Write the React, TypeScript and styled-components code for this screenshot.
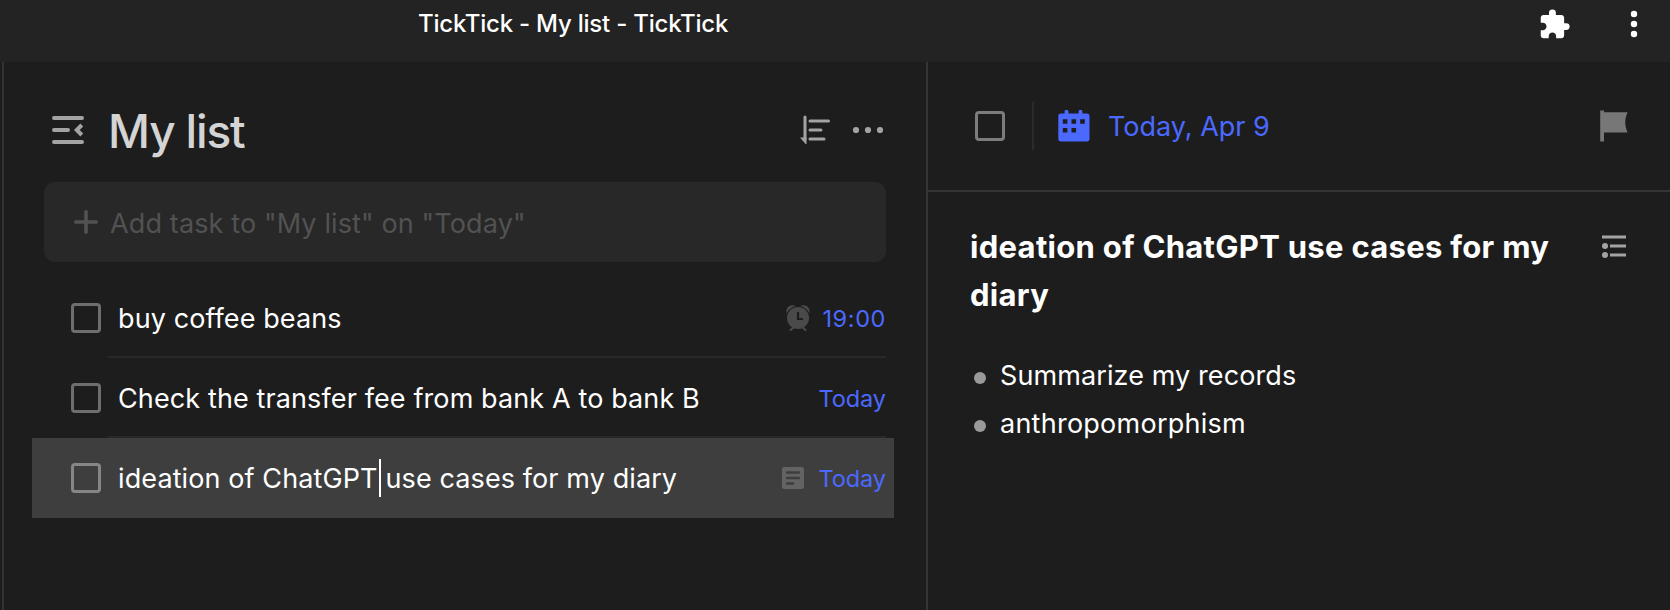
import React from "react";
import styled, { createGlobalStyle } from "styled-components";
import { MdExtension } from "react-icons/md";

const blue = "#4b69ff";

const GlobalStyle = createGlobalStyle`
  * { box-sizing: border-box; }
  body {
    margin: 0;
    background: #1d1d1d;
    font-family: Inter, "Liberation Sans", sans-serif;
    color: #fff;
  }
`;

const Window = styled.div`
  display: flex;
  flex-direction: column;
  height: 610px;
  overflow: hidden;
`;

const TitleBar = styled.header`
  display: flex;
  justify-content: space-between;
  height: 62px;
  padding: 0 32px 0 418px;
  background: #232323;
`;

const WindowTitle = styled.div`
  font-size: 24px;
  font-weight: 500;
  line-height: 47px;
  letter-spacing: -0.22px;
  white-space: pre;
`;

const WindowActions = styled.div`
  display: flex;
  gap: 59px;
  height: 48px;
  align-items: center;
`;

const Panes = styled.div`
  display: flex;
  flex: 1;
  margin-left: 2px;
  border-left: 2px solid #333;
`;

const ListPane = styled.main`
  width: 924px;
  border-right: 2px solid #353535;
  padding: 0 32px 0 28px;
`;

const ListHeader = styled.div`
  display: flex;
  align-items: center;
  height: 120px;
  padding: 16px 10px 0 20px;
`;

const ListTitle = styled.h1`
  flex: 1;
  margin: 2px 0 0 23px;
  font-size: 46px;
  font-weight: 500;
  line-height: 60px;
  letter-spacing: -1.15px;
  color: #d4d4d4;
`;

const HeaderTools = styled.div`
  display: flex;
  align-items: center;
  gap: 21px;
`;

const AddTask = styled.div`
  display: flex;
  align-items: center;
  gap: 12px;
  height: 80px;
  margin: 0 8px 16px 12px;
  padding-left: 30px;
  border-radius: 11px;
  background: #282828;
  color: #525252;
`;

const Placeholder = styled.span`
  padding-top: 4px;
  font-size: 27px;
  line-height: 40px;
  letter-spacing: 0.13px;
`;

const TaskRow = styled.div<{ $selected?: boolean }>`
  display: flex;
  height: 80px;
  padding: 0 8px 0 39px;
  background: ${(p) => (p.$selected ? "#3e3e3e" : "transparent")};
`;

const CheckBox = styled.span<{ $color: string }>`
  flex: none;
  width: 30px;
  height: 30px;
  border: 3px solid ${(p) => p.$color};
  border-radius: 4px;
`;

const CheckCell = styled.div`
  display: flex;
  align-items: center;
  width: 37px;
`;

const TaskBody = styled.div<{ $line?: boolean }>`
  display: flex;
  align-items: center;
  flex: 1;
  padding-left: 10px;
  box-shadow: ${(p) => (p.$line ? "inset 0 -2px #292929" : "none")};
`;

const TaskName = styled.span<{ $spacing: number }>`
  display: flex;
  align-items: center;
  flex: 1;
  padding-top: 2px;
  font-size: 27px;
  line-height: 40px;
  letter-spacing: ${(p) => p.$spacing}px;
  white-space: pre;
`;

const Caret = styled.i`
  width: 2px;
  height: 38px;
  margin: 0 5px 2px 1px;
  background: #fff;
`;

const Due = styled.span<{ $spacing: number }>`
  padding-top: 2px;
  font-size: 23.5px;
  line-height: 40px;
  letter-spacing: ${(p) => p.$spacing}px;
  color: ${blue};
`;

const MetaIcon = styled.span<{ $gap: number }>`
  display: flex;
  margin-right: ${(p) => p.$gap}px;
`;

const DetailPane = styled.aside`
  flex: 1;
`;

const DetailHeader = styled.div`
  display: flex;
  align-items: center;
  height: 130px;
  padding: 0 42px 0 47px;
  border-bottom: 2px solid #353535;
`;

const Separator = styled.span`
  width: 2px;
  height: 48px;
  margin: 0 24px 0 27px;
  background: #2b2b2b;
`;

const DueDate = styled.span`
  flex: 1;
  margin-left: 18px;
  padding-top: 2px;
  font-size: 27px;
  line-height: 40px;
  color: ${blue};
`;

const DetailBody = styled.div`
  padding: 31px 44px 0 42px;
`;

const DetailTop = styled.div`
  display: flex;
  justify-content: space-between;
`;

const DetailTitle = styled.h2`
  width: 600px;
  margin: 0;
  font-size: 31px;
  font-weight: 700;
  line-height: 48px;
  letter-spacing: 0.3px;
`;

const OutlineButton = styled.div`
  padding-top: 12px;
`;

const Notes = styled.ul`
  margin: 33px 0 0;
  padding: 0 0 0 4px;
  list-style: none;
`;

const Note = styled.li<{ $spacing: number }>`
  display: flex;
  align-items: center;
  gap: 14px;
  font-size: 27px;
  line-height: 48px;
  letter-spacing: ${(p) => p.$spacing}px;
`;

const Bullet = styled.span`
  width: 12px;
  height: 12px;
  margin-top: 4px;
  border-radius: 50%;
  background: #999;
`;

const Svg = styled.svg`
  display: block;
  flex: none;
`;

const CollapseIcon = () => (
  <Svg width="33" height="28" viewBox="0 0 33 28" fill="none" stroke="#a3a3a3" strokeWidth="4" strokeLinecap="round">
    <path d="M2 2H30M2 14H16M2 26H30" />
    <path d="M29.8 9L24.8 14L29.8 19" strokeLinecap="butt" />
  </Svg>
);

const SortIcon = () => (
  <Svg width="31" height="30" viewBox="0 0 31 30" fill="none" stroke="#a3a3a3" strokeWidth="3" strokeLinecap="round">
    <path d="M5 2V24" />
    <path d="M0 22.4H6.5V29H5.6Z" fill="#a3a3a3" stroke="none" />
    <path d="M10 6H28.5M10 15H21M10 24H24" />
  </Svg>
);

const MoreIcon = () => (
  <Svg width="32" height="8" viewBox="0 0 32 8" fill="#a3a3a3">
    <circle cx="4" cy="4" r="3.1" />
    <circle cx="16" cy="4" r="3.1" />
    <circle cx="28" cy="4" r="3.1" />
  </Svg>
);

const KebabIcon = () => (
  <Svg width="8" height="28" viewBox="0 0 8 28" fill="#fff">
    <circle cx="4" cy="4" r="3.2" />
    <circle cx="4" cy="14" r="3.2" />
    <circle cx="4" cy="24" r="3.2" />
  </Svg>
);

const PlusIcon = () => (
  <Svg width="24" height="24" viewBox="0 0 24 24" stroke="currentColor" strokeWidth="3.6" strokeLinecap="round">
    <path d="M12 1.8V22.2M1.8 12H22.2" />
  </Svg>
);

const AlarmIcon = () => (
  <Svg width="24" height="26" viewBox="0 0 24 26" fill="#4a4a4a">
    <path d="M0.6 8.2C-0.6 3.8 2.6 -0.2 7 0.2C8.4 0.3 9.2 0.8 9.6 1.1C5.6 2.2 2.6 4.8 0.6 8.2Z" />
    <path d="M23.4 8.2C24.6 3.8 21.4 -0.2 17 0.2C15.6 0.3 14.8 0.8 14.4 1.1C18.4 2.2 21.4 4.8 23.4 8.2Z" />
    <circle cx="12" cy="13" r="11" />
    <path d="M7.4 22.5L4.6 25M16.6 22.5L19.4 25" stroke="#4a4a4a" strokeWidth="2.2" strokeLinecap="round" />
    <path d="M12 7V14H17" fill="none" stroke="#1d1d1d" strokeWidth="2.2" />
  </Svg>
);

const NoteIcon = () => (
  <Svg width="22" height="22" viewBox="0 0 22 22">
    <rect width="22" height="22" rx="2.5" fill="#636363" />
    <path d="M5 5.5H17M5 11H17M5 16.5H11.2" stroke="#3e3e3e" strokeWidth="2.4" strokeLinecap="round" />
  </Svg>
);

const CalendarIcon = () => (
  <Svg width="32" height="32" viewBox="0 0 32 32" fill={blue}>
    <path d="M6.6 4V1.6a1.9 1.9 0 0 1 3.8 0V4zM20.6 4V1.6a1.9 1.9 0 0 1 3.8 0V4z" />
    <rect x="0.3" y="3.4" width="31.2" height="28" rx="2.6" />
    <path
      fill="#1d1d1d"
      d="M4.8 9.2h4.6v4.6H4.8zM13.5 9.2h4.6v4.6h-4.6zM22.2 9.2h4.6v4.6h-4.6zM4.8 18h4.6v4.6H4.8zM13.5 18h4.6v4.6h-4.6z"
    />
  </Svg>
);

const FlagIcon = () => (
  <Svg width="28" height="32" viewBox="0 0 28 32" fill="#777">
    <path d="M0.2 0.5H4V2.2H27.6C24.5 9 24.5 15.5 27.6 22.4H4V31.5H0.2Z" />
  </Svg>
);

const OutlineIcon = () => (
  <Svg width="24" height="24" viewBox="0 0 24 24" fill="#a3a3a3">
    <path d="M0 0.5H24V3.6H0zM8 9.5H24V12.6H8zM8 18.5H24V21.6H8z" />
    <circle cx="3" cy="11" r="3" />
    <circle cx="3" cy="20" r="3" />
  </Svg>
);

export default function App() {
  return (
    <Window>
      <GlobalStyle />
      <TitleBar>
        <WindowTitle>TickTick - My list - TickTick</WindowTitle>
        <WindowActions>
          <MdExtension size={33} color="#fff" />
          <KebabIcon />
        </WindowActions>
      </TitleBar>
      <Panes>
        <ListPane>
          <ListHeader>
            <CollapseIcon />
            <ListTitle>My list</ListTitle>
            <HeaderTools>
              <SortIcon />
              <MoreIcon />
            </HeaderTools>
          </ListHeader>
          <AddTask>
            <PlusIcon />
            <Placeholder>Add task to "My list" on "Today"</Placeholder>
          </AddTask>
          <TaskRow>
            <CheckCell><CheckBox $color="#6e6e6e" /></CheckCell>
            <TaskBody $line>
              <TaskName $spacing={0.1}>buy coffee beans</TaskName>
              <MetaIcon $gap={12}><AlarmIcon /></MetaIcon>
              <Due $spacing={0.6}>19:00</Due>
            </TaskBody>
          </TaskRow>
          <TaskRow>
            <CheckCell><CheckBox $color="#6e6e6e" /></CheckCell>
            <TaskBody $line>
              <TaskName $spacing={0.115}>Check the transfer fee from bank A to bank B</TaskName>
              <Due $spacing={-0.05}>Today</Due>
            </TaskBody>
          </TaskRow>
          <TaskRow $selected>
            <CheckCell><CheckBox $color="#868686" /></CheckCell>
            <TaskBody>
              <TaskName $spacing={0.1}>
                ideation of ChatGPT<Caret />use cases for my diary
              </TaskName>
              <MetaIcon $gap={14}><NoteIcon /></MetaIcon>
              <Due $spacing={-0.05}>Today</Due>
            </TaskBody>
          </TaskRow>
        </ListPane>
        <DetailPane>
          <DetailHeader>
            <CheckBox $color="#7c7c7c" />
            <Separator />
            <CalendarIcon />
            <DueDate>Today, Apr 9</DueDate>
            <FlagIcon />
          </DetailHeader>
          <DetailBody>
            <DetailTop>
              <DetailTitle>ideation of ChatGPT use cases for my diary</DetailTitle>
              <OutlineButton><OutlineIcon /></OutlineButton>
            </DetailTop>
            <Notes>
              <Note $spacing={0.1}><Bullet />Summarize my records</Note>
              <Note $spacing={0.25}><Bullet />anthropomorphism</Note>
            </Notes>
          </DetailBody>
        </DetailPane>
      </Panes>
    </Window>
  );
}
